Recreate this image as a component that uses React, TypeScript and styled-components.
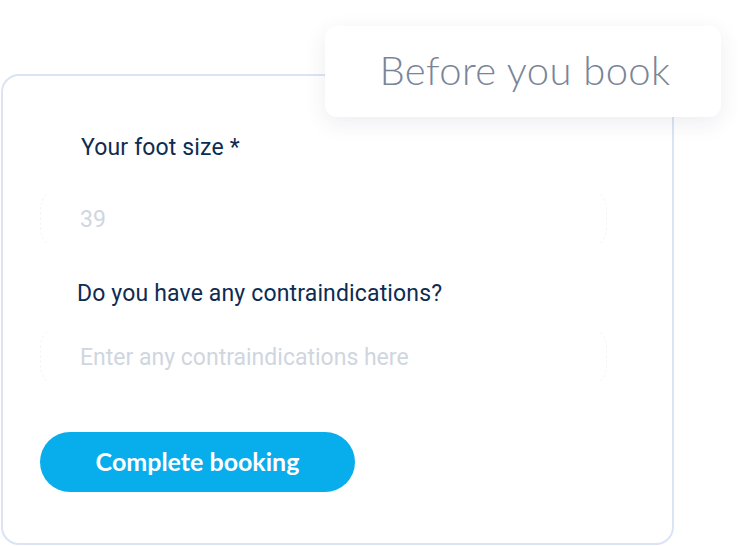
import styled, { createGlobalStyle } from 'styled-components';

const GlobalStyle = createGlobalStyle`
  html, body {
    margin: 0;
    padding: 0;
    background: #ffffff;
  }
  body {
    font-family: Roboto, "Liberation Sans", sans-serif;
  }
`;

const fields = [
  {
    name: 'footSize',
    label: 'Your foot size *',
    placeholder: '39',
    labelOffset: 41,
    labelGap: 25,
  },
  {
    name: 'contraindications',
    label: 'Do you have any contraindications?',
    placeholder: 'Enter any contraindications here',
    labelOffset: 37,
    labelGap: 17,
  },
];

export default function App() {
  return (
    <>
      <GlobalStyle />
      <Page>
        <Card>
          <Header>
            <HeaderTitle>Before you book</HeaderTitle>
          </Header>
          <Form>
            {fields.map(({ name, label, placeholder, labelOffset, labelGap }) => (
              <Field key={name}>
                <Label $offset={labelOffset} $gap={labelGap} htmlFor={name}>
                  {label}
                </Label>
                <Input id={name} placeholder={placeholder} />
              </Field>
            ))}
            <SubmitButton type="button">Complete booking</SubmitButton>
          </Form>
        </Card>
      </Page>
    </>
  );
}

const Page = styled.div`
  width: 754px;
  height: 546px;
  padding-top: 74px;
  padding-left: 1px;
  box-sizing: border-box;
  overflow: hidden;
`;

const Card = styled.div`
  position: relative;
  width: 673px;
  height: 471px;
  box-sizing: border-box;
  border: 2px solid #dae4f4;
  border-radius: 18px;
  background: #ffffff;
`;

const Header = styled.div`
  position: absolute;
  top: -50px;
  left: 322px;
  width: 396px;
  height: 91px;
  border-radius: 12px;
  background: #ffffff;
  box-shadow: 0 6px 22px rgba(40, 60, 90, 0.09);
  display: flex;
  align-items: center;
  justify-content: center;
`;

const HeaderTitle = styled.h2`
  margin: 0 0 4px 4px;
  font-family: Lato, "Open Sans", sans-serif;
  font-weight: 300;
  font-size: 40px;
  color: #7a8598;
  letter-spacing: 0.4px;
`;

const Form = styled.form`
  display: flex;
  flex-direction: column;
  padding: 58px 0 0 37px;
`;

const Field = styled.div`
  display: flex;
  flex-direction: column;

  & + & {
    margin-top: 30px;
  }
`;

const Label = styled.label<{ $offset: number; $gap: number }>`
  margin-left: ${(p) => p.$offset}px;
  margin-bottom: ${(p) => p.$gap}px;
  font-size: 23px;
  line-height: 28px;
  letter-spacing: 0.15px;
  color: #0d2c52;
`;

const Input = styled.input`
  width: 567px;
  height: 63px;
  box-sizing: border-box;
  padding: 2px 0 0 39px;
  border: 1px dashed #f3f5f8;
  border-top-color: transparent;
  border-bottom-color: transparent;
  border-radius: 22px;
  background: transparent;
  font-family: Roboto, sans-serif;
  font-size: 23px;
  color: #0d2c52;
  outline: none;

  &::placeholder {
    color: #cfd6df;
  }
`;

const SubmitButton = styled.button`
  width: 315px;
  height: 60px;
  margin-top: 44px;
  padding-bottom: 3px;
  border: none;
  border-radius: 30px;
  background: #08aeec;
  color: #ffffff;
  font-family: Lato, "Open Sans", sans-serif;
  font-weight: 700;
  font-size: 25px;
  cursor: pointer;
`;
